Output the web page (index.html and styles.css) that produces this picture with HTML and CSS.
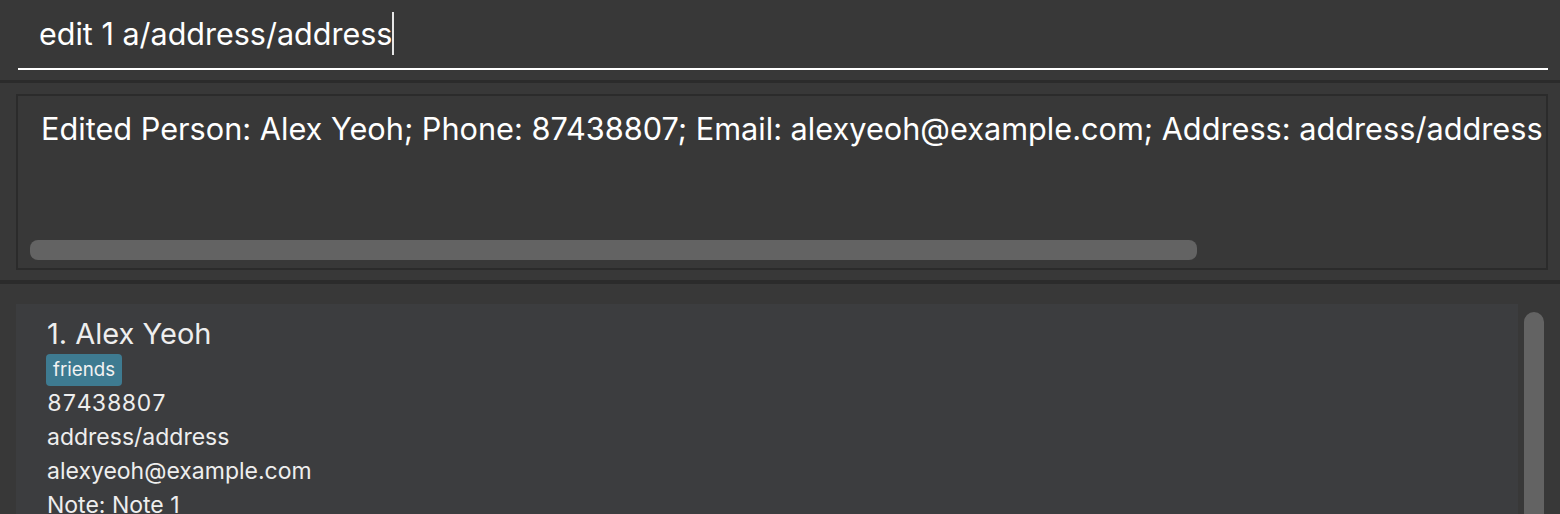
FILE: index.html
```html
<!DOCTYPE html>
<html lang="en">
<head>
<meta charset="utf-8">
<title>Address Book</title>
<link rel="stylesheet" href="styles.css">
</head>
<body>
<div class="app">
  <div class="command-pane">
    <div class="command-field"><span class="command-text">edit 1 a/address/address</span><span class="caret"></span></div>
  </div>
  <div class="divider"></div>
  <div class="result-pane">
    <div class="result-box">
      <div class="result-text">Edited Person: Alex Yeoh; Phone: 87438807; Email: alexyeoh@example.com; Address: address/address</div>
      <div class="hscroll"></div>
    </div>
  </div>
  <div class="divider divider-low"></div>
  <div class="list-pane">
    <div class="card">
      <div class="name">1. Alex Yeoh</div>
      <div class="tags"><span class="tag">friends</span></div>
      <div class="detail phone">87438807</div>
      <div class="detail">address/address</div>
      <div class="detail">alexyeoh@example.com</div>
      <div class="detail">Note: Note 1</div>
    </div>
    <div class="vscroll"></div>
  </div>
</div>
</body>
</html>
```
FILE: styles.css
```css
html, body {
  margin: 0;
  padding: 0;
  background: #383838;
  height: 514px;
  overflow: hidden;
}
.app {
  font-family: "Inter", "Roboto", sans-serif;
  color: #ffffff;
  display: flex;
  flex-direction: column;
}
.command-pane {
  height: 80px;
  padding: 0 12px 0 18px;
  box-sizing: border-box;
}
.command-field {
  height: 70px;
  box-sizing: border-box;
  border-bottom: 2px solid #ffffff;
  padding: 12px 0 0 21px;
  font-size: 30.5px;
  white-space: nowrap;
}
.caret {
  display: inline-block;
  width: 0;
  height: 43px;
  border-left: 2px solid #e6e6e6;
  vertical-align: -10px;
  margin-left: 0;
}
.divider {
  height: 3px;
  background: #2b2b2b;
}
.divider-low {
  height: 4px;
}
.result-pane {
  height: 197px;
  box-sizing: border-box;
  padding: 11px 12px 0 16px;
}
.result-box {
  height: 176px;
  box-sizing: border-box;
  border: 2px solid #2b2b2b;
  display: flex;
  flex-direction: column;
  overflow: hidden;
}
.result-text {
  padding: 14px 0 0 23px;
  font-size: 30.7px;
  white-space: nowrap;
  overflow: hidden;
}
.hscroll {
  margin: auto 0 8px 12px;
  width: 1167px;
  height: 20px;
  border-radius: 8px;
  background: #636363;
  flex: none;
}
.list-pane {
  display: flex;
  padding: 20px 16px 0 16px;
  gap: 6px;
}
.card {
  flex: 1;
  min-height: 320px;
  background: #3c3d3f;
  padding: 12px 0 0 31px;
  color: #eeeeee;
}
.name {
  font-size: 29px;
}
.tags {
  margin-top: 3px;
  display: flex;
}
.tag {
  margin-left: -1px;
  height: 32px;
  line-height: 32px;
  padding: 0 7px;
  font-size: 18.7px;
  background: #3e7b91;
  border-radius: 4px;
  color: #f2f2f2;
}
.detail {
  font-size: 23px;
  line-height: 34px;
}
.phone {
  font-variant-numeric: tabular-nums;
}
.vscroll {
  flex: none;
  width: 20px;
  height: 360px;
  margin-top: 8px;
  border-radius: 10px;
  background: #636363;
}
```
